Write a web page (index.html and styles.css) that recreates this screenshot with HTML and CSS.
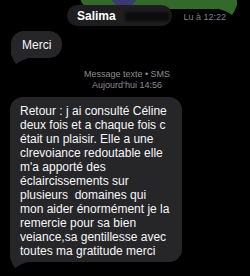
FILE: index.html
```html
<!DOCTYPE html>
<html lang="fr">
<head>
    <meta charset="UTF-8">
    <meta name="viewport" content="width=device-width, initial-scale=1.0">
    <title>Salima</title>
    <link rel="stylesheet" href="styles.css">
</head>
<body>
    <div class="thread">
        <div class="bubble sent">
            <svg class="tail tail-right" viewBox="0 0 18 16" width="18" height="16"><path d="M18 0 L18 6 Q16 12 13 16 Q8 12 0 10 L0 0 Z"/></svg>
        </div>
        <div class="receipt">Lu à 12:22</div>

        <div class="bubble received merci">
            <svg class="tail" viewBox="0 0 18 16" width="18" height="16"><path d="M0 0 L0 6 Q2 12 5 16 Q10 12 18 10 L18 0 Z"/></svg>
            <span class="text">Merci</span>
        </div>

        <div class="meta">
            <div>Message texte • SMS</div>
            <div>Aujourd’hui 14:56</div>
        </div>

        <div class="bubble received long">
            <svg class="tail" viewBox="0 0 18 16" width="18" height="16"><path d="M0 0 L0 6 Q2 12 5 16 Q10 12 18 10 L18 0 Z"/></svg>
            <span class="text">Retour : j ai consulté Céline deux fois et a chaque fois c était un plaisir. Elle a une clrevoiance redoutable elle m'a apporté des éclaircissements sur plusieurs&nbsp; domaines qui mon aider énormément je la remercie pour sa bien veiance,sa gentillesse avec toutes ma gratitude merci</span>
        </div>
    </div>

    <!-- en-tête flottant au-dessus des messages -->
    <div class="header">
        <div class="avatar"></div>
        <div class="name-pill">
            <span class="name">Salima</span>
            <span class="redacted"></span>
        </div>
    </div>
</body>
</html>
```

FILE: styles.css
```css
body {
    margin: 0;
    background-color: #000;
    font-family: "Liberation Sans", Arial, sans-serif;
    width: 250px;
    height: 276px;
    overflow: hidden;
    position: relative;
}
.thread {
    display: flex;
    flex-direction: column;
}
.bubble {
    position: relative;
    font-size: 12px;
    line-height: 14px;
    color: #f7f7f9;
    border-radius: 13px;
}
.bubble .text {
    position: relative;
}
.bubble .tail {
    position: absolute;
    left: 0;
    bottom: -6px;
}
.received {
    background-color: #262628;
    align-self: flex-start;
}
.received .tail path {
    fill: #262628;
}
.sent {
    background-color: #336a2c;
    align-self: flex-end;
    width: 150px;
    height: 29px;
    margin-top: -20px;
    margin-right: 20px;
}
.sent .tail-right {
    left: auto;
    right: -7px;
}
.sent .tail path {
    fill: #336a2c;
}
.receipt {
    align-self: flex-end;
    margin-top: 3px;
    margin-right: 24px;
    font-size: 9px;
    line-height: 11px;
    color: #7f7f85;
}
.merci {
    margin-top: 8px;
    margin-left: 11px;
    padding: 6.5px 11px;
}
.meta {
    margin-top: 10.5px;
    padding-left: 4px;
    text-align: center;
    font-size: 9px;
    line-height: 11px;
    color: #8d8d92;
}
.long {
    margin-top: 6.5px;
    margin-left: 10px;
    width: 152px;
    padding: 7px 10px 4px;
}
.header {
    position: absolute;
    top: 0;
    left: 0;
    width: 250px;
}
.avatar {
    position: absolute;
    left: 110px;
    top: -21px;
    width: 28px;
    height: 28px;
    border-radius: 50%;
    background-color: #3b3872;
}
.name-pill {
    position: absolute;
    left: 67px;
    top: 5px;
    width: 95px;
    height: 21px;
    padding-left: 10px;
    border-radius: 11px;
    background-color: #1e1e20;
    display: flex;
    align-items: center;
    gap: 9px;
}
.name {
    font-size: 12px;
    font-weight: bold;
    color: #fff;
}
.redacted {
    width: 44px;
    height: 9px;
    margin-top: 2px;
    background-color: #0b0b0c;
    filter: blur(1.5px);
}
```
